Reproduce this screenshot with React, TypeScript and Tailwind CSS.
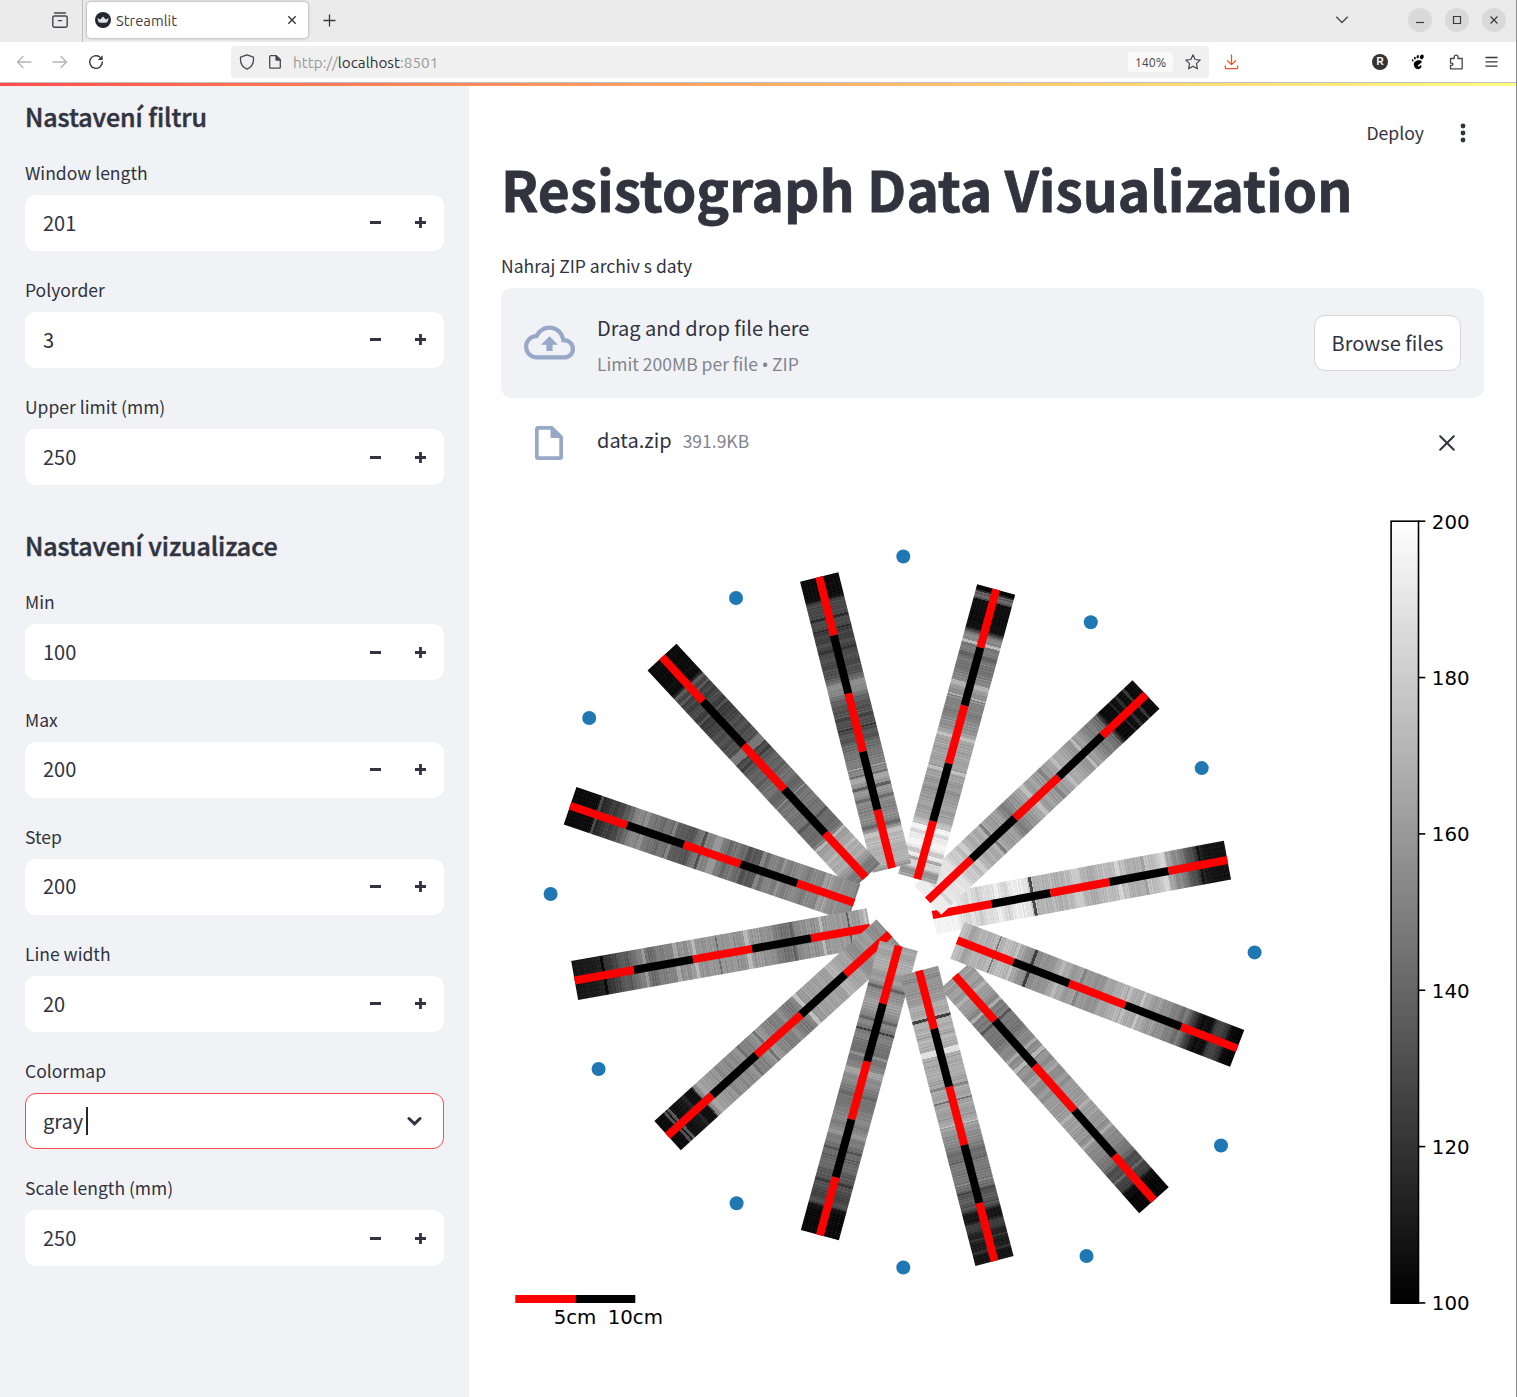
import React from "react";

const UI = "font-['Ubuntu','Noto_Sans',sans-serif]";
const SANS = "font-['Source_Sans_Pro','Noto_Sans_CJK_SC',sans-serif]";

/* ---------- Browser chrome ---------- */

function TabBar() {
  return (
    <div className="flex h-[42px] items-center bg-[#ebebeb] pr-[9px]">
      <div className="flex h-full w-[83px] items-center border-r border-[#bdbdbd] pl-[52px]">
        <svg className="mt-[-2px]" width="16" height="16" viewBox="0 0 16 16" fill="none" stroke="#45454b" strokeWidth="1.4" strokeLinecap="round">
          <path d="M2.5 1h11" />
          <rect x=".8" y="4" width="14.4" height="11.2" rx="1.6" />
          <path d="M6.3 8.6h3.4" />
        </svg>
      </div>
      <div className="ml-1 mt-[-2px] flex h-9 w-[221px] items-center rounded bg-white pl-2 pr-[10px] shadow-[0_0_3px_rgba(0,0,0,0.4)]">
        <svg width="16" height="16" viewBox="0 0 16 16">
          <circle cx="8" cy="8" r="8" fill="#262730" />
          <path d="M2.3 6 5.2 7.4 8 4.6l2.8 2.8L13.700 6 12.300 10.200Q8 11.200 3.700 10.200Z" fill="#e3e3e6" />
        </svg>
        <span className={`${UI} ml-[5px] flex-1 pt-px text-[14.800px] leading-5 text-[#3f4044]`}>Streamlit</span>
        <svg width="12" height="12" viewBox="0 0 12 12" stroke="#3a3a3a" strokeWidth="1.4">
          <path d="M2.300 2.300l7.400 7.400M9.700 2.300l-7.400 7.400" />
        </svg>
      </div>
      <svg className="ml-[15px] mt-[-1px]" width="13" height="13" viewBox="0 0 13 13" stroke="#3a3a3a" strokeWidth="1.3">
        <path d="M6.500 .5v12M.5 6.500h12" />
      </svg>
      <div className="flex-1" />
      <svg className="mr-[59px] mt-[-2px]" width="14" height="14" viewBox="0 0 14 14" fill="none" stroke="#4a4a4a" strokeWidth="1.4">
        <path d="M1.300 3.800 7 9.500l5.700-5.700" />
      </svg>
      <div className="mt-[-2px] flex gap-[13px] pr-[1px]">
        {["M8 14.500h8", "M8.500 8.500h7v7h-7z", "M8.500 8.500l7 7M15.500 8.500l-7 7"].map((d) => (
          <span key={d} className="flex size-6 rounded-full bg-[#d9d9d9]">
            <svg width="24" height="24" viewBox="0 0 24 24" fill="none" stroke="#3a3a3a" strokeWidth="1.200">
              <path d={d} />
            </svg>
          </span>
        ))}
      </div>
    </div>
  );
}

function NavBar() {
  return (
    <div className="flex h-10 items-center bg-white pl-4 pr-[18px]">
      <svg width="16" height="14" viewBox="0 0 16 14" fill="none" stroke="#b4b4b6" strokeWidth="1.300" strokeLinecap="round">
        <path d="M15 7H1.500M7 1.500 1.500 7 7 12.500" />
      </svg>
      <svg className="ml-5" width="16" height="14" viewBox="0 0 16 14" fill="none" stroke="#b4b4b6" strokeWidth="1.300" strokeLinecap="round">
        <path d="M1 7h13.500M9 1.500 14.500 7 9 12.500" />
      </svg>
      <svg className="ml-5" width="16" height="16" viewBox="0 0 16 16" fill="none" stroke="#37373b" strokeWidth="1.400" strokeLinecap="round">
        <path d="M14.300 8A6.300 6.300 0 1 1 11.800 3" />
        <path d="M14.600 1.200v4.900H9.700z" fill="#37373b" stroke="none" />
      </svg>
      <div className="ml-[127px] flex h-8 w-[978px] items-center rounded bg-[#f0f0f0] pl-2 pr-2">
        <svg width="16" height="16" viewBox="0 0 16 16" fill="none" stroke="#4a4a4e" strokeWidth="1.300" strokeLinejoin="round">
          <path d="M8 .8 14.400 3.200c.6 5-1.600 9.900-6.400 12C3.200 13.100 1 8.200 1.600 3.200z" />
        </svg>
        <svg className="ml-[14px]" width="12" height="16" viewBox="0 0 12 16" fill="none" stroke="#4a4a4e" strokeWidth="1.300" strokeLinejoin="round">
          <path d="M1.800 1.700h5.400l4.100 4.100v7.400q0 1-1 1H1.700q-1 0-1-1V2.700q0-1 1.100-1z" />
          <path d="M7 1.700v4.300h4.300z" fill="#4a4a4e" />
        </svg>
        <span className={`${UI} ml-3 flex-1 pt-px text-[15.300px] leading-5 text-[#99999b]`}>
          http://<span className="text-[#333336]">localhost</span>:8501
        </span>
        <span className={`${UI} flex h-5 w-[45px] items-center justify-center rounded-sm bg-[#fafafa] pt-px text-[12.500px] text-[#48484c]`}>140%</span>
        <svg className="ml-3" width="16" height="16" viewBox="0 0 16 16" fill="none" stroke="#48484c" strokeWidth="1.200" strokeLinejoin="round">
          <path d="M8 .8l2.100 4.700 5.100.6-3.800 3.500 1 5.200L8 12.200l-4.400 2.600 1-5.200L.8 6.100l5.100-.6z" />
        </svg>
      </div>
      <svg className="ml-[15px]" width="15" height="16" viewBox="0 0 15 16" fill="none" stroke="#e9541f" strokeWidth="1.300" strokeLinecap="round" strokeLinejoin="round">
        <path d="M7.500 1v9.200M3.400 6.600l4.100 4 4.100-4M1.300 11.800v1.700q0 1.200 1.200 1.200h10q1.200 0 1.200-1.200v-1.700" />
      </svg>
      <div className="flex-1" />
      <span className="flex size-4 items-center justify-center rounded-full bg-[#343437] font-['Liberation_Sans',sans-serif] text-[10px] font-bold leading-none text-white">R</span>
      <svg className="ml-[23px]" width="14" height="16" viewBox="0 0 14 16" fill="#000">
        <ellipse cx="10.800" cy="2.900" rx="1.900" ry="2.300" transform="rotate(25 10.800 2.900)" />
        <ellipse cx="6.700" cy="2.700" rx="1.100" ry="1.700" transform="rotate(10 6.700 2.700)" />
        <ellipse cx="3.900" cy="4.200" rx=".9" ry="1.400" transform="rotate(-10 3.900 4.200)" />
        <ellipse cx="1.700" cy="6.300" rx=".8" ry="1.200" transform="rotate(-25 1.700 6.300)" />
        <path d="M9.900 6.600C7 5.400 2.500 7.200 2.800 10.800 3 13.700 5.100 15.400 7.300 15.200c2-.2 3.300-1.800 3.200-3.100-.1-.9-1-1-1.600-.4-.6.700-1.200 1.200-1.800.6-.5-.6 0-1.100.9-1.700 2-1.300 3.700-2.900 1.900-4z" />
      </svg>
      <svg className="ml-6" width="15" height="16" viewBox="0 0 15 16" fill="none" stroke="#48484c" strokeWidth="1.300" strokeLinejoin="round">
        <path d="M1.500 9.200V4.500h3.700V3a1.900 1.900 0 0 1 3.800 0v1.500h4.200v10.300H1.500v-3.400h1.300a1.100 1.100 0 0 0 0-2.200z" />
      </svg>
      <svg className="ml-[21px]" width="13" height="12" viewBox="0 0 13 12" stroke="#37373b" strokeWidth="1.300">
        <path d="M.5 1.500h12M.5 5.800h12M.5 10.100h12" />
      </svg>
    </div>
  );
}

/* ---------- Sidebar ---------- */

function FieldLabel({ children }: { children: React.ReactNode }) {
  return <div className="h-[39px] pt-[3px] text-[17.500px] leading-7">{children}</div>;
}

function NumberField({ label, value }: { label: string; value: string }) {
  return (
    <div className="h-[117.200px]">
      <FieldLabel>{label}</FieldLabel>
      <div className="flex h-14 items-center rounded-[11px] bg-white pl-[18px] pr-[18px]">
        <span className="flex-1 pb-px text-[20px] leading-8">{value}</span>
        <svg className="mb-[0.600px]" width="11" height="11" viewBox="0 0 11 11" stroke="#31333f" strokeWidth="3">
          <path d="M0 5.500h11" />
        </svg>
        <svg className="mb-[0.600px] ml-[34px]" width="11" height="11" viewBox="0 0 11 11" stroke="#31333f" strokeWidth="2.800">
          <path d="M0 5.500h11M5.500 0v11" />
        </svg>
      </div>
    </div>
  );
}

function Sidebar() {
  return (
    <aside className="w-[469px] shrink-0 bg-[#f0f2f6] pl-[25px] pr-[25px]">
      <h2 className="h-[70px] pt-[10px] text-[25px] font-medium leading-10 tracking-[-0.060px] [-webkit-text-stroke:0.5px]">Nastavení filtru</h2>
      <NumberField label="Window length" value="201" />
      <NumberField label="Polyorder" value="3" />
      <NumberField label="Upper limit (mm)" value="250" />
      <h2 className="h-[77.900px] pt-[17px] text-[25px] font-medium leading-10 tracking-[-0.060px] [-webkit-text-stroke:0.5px]">Nastavení vizualizace</h2>
      <NumberField label="Min" value="100" />
      <NumberField label="Max" value="200" />
      <NumberField label="Step" value="200" />
      <NumberField label="Line width" value="20" />
      <div className="h-[117.200px]">
        <FieldLabel>Colormap</FieldLabel>
        <div className="flex h-14 items-center rounded-[11px] border border-[#ff4b4b] bg-white pl-[17px] pr-[21px]">
          <span className="text-[20px] leading-8">gray</span>
          <span className="ml-[3px] h-7 w-[2px] bg-[#262730]" />
          <span className="flex-1" />
          <svg width="15" height="10" viewBox="0 0 15 10" fill="none" stroke="#31333f" strokeWidth="3" strokeLinecap="round" strokeLinejoin="miter">
            <path d="M2 2.500l5.500 5.300L13 2.500" />
          </svg>
        </div>
      </div>
      <NumberField label="Scale length (mm)" value="250" />
    </aside>
  );
}

/* ---------- Chart ---------- */

type Stops = [number, number][];
interface Core {
  from: [number, number];
  to: [number, number];
  base: Stops; // distance from the inner end (0-300), grey level
  marks: [number, number, number][]; // distance, width, grey level
}

const CORES: Core[] = [
  { from: [932.5, 915], to: [1227.7, 860], base: [[0, 254], [24, 253], [27, 225], [60, 228], [98, 236], [104, 180], [140, 188], [160, 176], [185, 182], [215, 185], [236, 200], [246, 150], [258, 120], [268, 60], [278, 20], [300, 10]], marks: [[48, 3, 205], [66, 2, 250], [84, 2, 250], [102, 2, 50], [148, 8, 212], [190, 4, 225], [216, 3, 160], [236, 4, 225], [272, 2, 5]] },
  { from: [927.7, 900.3], to: [1145.5, 695], base: [[0, 250], [25, 238], [50, 205], [80, 178], [110, 165], [118, 135], [132, 150], [160, 150], [190, 170], [220, 165], [232, 125], [248, 100], [254, 10], [300, 8]], marks: [[15, 4, 215], [62, 4, 215], [90, 2, 120], [146, 5, 205], [170, 4, 130], [188, 3, 200], [214, 3, 195], [268, 2, 45], [276, 3, 50], [287, 3, 60]] },
  { from: [917.3, 879], to: [996.3, 589], base: [[0, 175], [8, 150], [12, 215], [34, 245], [50, 240], [62, 175], [90, 155], [110, 165], [130, 165], [150, 160], [170, 130], [195, 150], [215, 130], [235, 115], [250, 130], [257, 10], [286, 8], [288, 105], [293, 100], [296, 0], [300, 0]], marks: [[20, 3, 160], [28, 4, 200], [36, 5, 255], [46, 3, 215], [52, 4, 255], [113, 3, 205], [147, 4, 205], [188, 2, 190], [200, 4, 190], [230, 5, 95], [243, 3, 205]] },
  { from: [892, 868], to: [819.2, 577], base: [[0, 150], [6, 170], [35, 185], [44, 130], [70, 140], [90, 155], [110, 120], [130, 95], [150, 70], [175, 100], [188, 145], [200, 75], [262, 70], [273, 80], [278, 10], [300, 5]], marks: [[37, 5, 205], [45, 3, 100], [72, 2, 100], [84, 2, 85], [92, 4, 175], [97, 2, 95], [104, 2, 170], [145, 2, 40], [156, 4, 60], [182, 5, 140], [189, 5, 145], [225, 2, 45], [247, 2, 35], [258, 2, 35]] },
  { from: [865.7, 877.3], to: [662.7, 657.8], base: [[0, 125], [12, 135], [22, 175], [48, 165], [58, 120], [100, 115], [135, 110], [160, 75], [180, 80], [215, 65], [250, 65], [260, 85], [265, 10], [300, 5]], marks: [[36, 3, 195], [52, 3, 195], [78, 2, 80], [110, 2, 150], [162, 4, 55], [174, 9, 130], [225, 3, 85], [252, 2, 95], [259, 3, 95]] },
  { from: [854, 902.7], to: [570, 805.7], base: [[0, 130], [15, 155], [50, 140], [85, 125], [110, 90], [128, 110], [160, 135], [175, 90], [205, 110], [228, 130], [250, 75], [268, 40], [276, 10], [300, 5]], marks: [[35, 3, 165], [78, 3, 155], [100, 4, 140], [115, 5, 75], [148, 8, 160], [162, 2, 70], [193, 3, 140], [223, 4, 150], [272, 3, 80]] },
  { from: [870, 927.7], to: [574.7, 980.5], base: [[0, 170], [18, 160], [40, 165], [58, 155], [85, 105], [100, 150], [125, 165], [150, 145], [180, 160], [215, 125], [235, 120], [258, 65], [270, 30], [300, 12]], marks: [[3, 3, 205], [20, 2, 80], [48, 4, 195], [78, 4, 95], [124, 5, 195], [154, 2, 100], [177, 3, 195], [196, 4, 175], [228, 4, 165], [270, 4, 0]] },
  { from: [889.7, 934], to: [668, 1135.3], base: [[0, 140], [25, 155], [60, 165], [85, 175], [110, 160], [120, 125], [155, 150], [200, 140], [235, 155], [248, 140], [251, 15], [280, 18], [292, 10], [300, 5]], marks: [[70, 2, 195], [112, 4, 205], [166, 3, 110], [188, 2, 100], [242, 5, 175], [262, 3, 40], [282, 3, 100], [287, 3, 90]] },
  { from: [898.7, 945.7], to: [820, 1234.7], base: [[0, 165], [35, 155], [45, 125], [60, 160], [88, 120], [110, 110], [130, 150], [155, 115], [195, 140], [220, 100], [268, 75], [272, 8], [300, 3]], marks: [[45, 2, 95], [62, 2, 175], [78, 2, 95], [89, 2, 40], [115, 2, 160], [132, 5, 170], [196, 5, 155], [212, 2, 70], [246, 2, 50]] },
  { from: [919, 970.7], to: [994.5, 1261], base: [[0, 150], [30, 165], [60, 175], [90, 180], [130, 165], [155, 165], [185, 125], [220, 120], [230, 75], [244, 85], [249, 15], [256, 20], [260, 60], [270, 30], [300, 15]], marks: [[49, 3, 45], [70, 3, 195], [84, 5, 240], [120, 2, 130], [134, 2, 100], [158, 2, 200], [196, 2, 90], [218, 2, 150], [227, 2, 60], [275, 2, 60], [288, 2, 50]] },
  { from: [955, 975.7], to: [1153.5, 1199.7], base: [[0, 150], [30, 165], [58, 120], [75, 115], [105, 140], [130, 150], [180, 160], [205, 150], [235, 130], [255, 75], [272, 70], [276, 5], [300, 2]], marks: [[24, 3, 185], [46, 3, 185], [62, 3, 80], [100, 3, 180], [112, 4, 195], [134, 3, 175], [182, 3, 185], [214, 3, 180], [252, 3, 70], [262, 2, 120]] },
  { from: [957.3, 940.3], to: [1237, 1048.3], base: [[0, 200], [10, 165], [30, 180], [50, 190], [76, 155], [82, 145], [110, 175], [128, 160], [134, 145], [170, 180], [200, 175], [225, 140], [245, 85], [258, 10], [268, 15], [274, 65], [284, 60], [289, 5], [300, 5]], marks: [[40, 2, 110], [60, 2, 205], [78, 3, 40], [108, 2, 195], [131, 3, 130], [180, 3, 200], [195, 4, 205], [240, 3, 130]] },
];

const SENSORS: [number, number][] = [
  [903.300, 556.5], [736, 598], [589.2, 718], [550.6, 894], [598.6, 1069], [736.6, 1203.2],
  [903.3, 1267.500], [1086.500, 1256], [1221, 1145.5], [1254.600, 952.4], [1201.700, 768.100], [1090.800, 622.200],
];

function levelAt(base: Stops, x: number) {
  for (let i = 1; i < base.length; i++) {
    const [x1, g1] = base[i];
    if (x <= x1) {
      const [x0, g0] = base[i - 1];
      return g0 + ((g1 - g0) * (x - x0)) / (x1 - x0);
    }
  }
  return base[base.length - 1][1];
}

function stripBands(core: Core, seed: number) {
  let s = seed * 7919 + 17;
  const rnd = () => {
    s = (s * 16807) % 2147483647;
    return s / 2147483647 - 0.5;
  };
  const bands: number[] = [];
  let slow = 0;
  for (let i = 0; i < 200; i++) {
    const x = (i + 0.5) * 1.5;
    slow = slow * 0.7 + rnd() * 18;
    const level = levelAt(core.base, x);
    const amp = level < 30 ? 0.4 : level > 235 ? 0.3 : 1;
    let g = level + (slow + rnd() * 8) * amp + (i % 2 ? 4 : -4) * amp;
    const mark = core.marks.find(([p, w]) => Math.abs(p - x) <= w / 2 + 0.1);
    if (mark) g = mark[2] * 0.85 + level * 0.15;
    bands.push(Math.round(Math.max(0, Math.min(255, g))));
  }
  return bands;
}

function CoreStrip({ core, index }: { core: Core; index: number }) {
  const [x0, y0] = core.from;
  const angle = (Math.atan2(core.to[1] - y0, core.to[0] - x0) * 180) / Math.PI;
  const bands = stripBands(core, index + 1);
  const id = `core-${index}`;
  return (
    <g transform={`translate(${x0} ${y0}) rotate(${angle.toFixed(3)})`}>
      <linearGradient id={id}>
        {bands.flatMap((g, i) => {
          const c = `rgb(${g},${g},${g})`;
          return [
            <stop key={`${i}a`} offset={i / 200} stopColor={c} />,
            <stop key={`${i}b`} offset={(i + 1) / 200} stopColor={c} />,
          ];
        })}
      </linearGradient>
      <rect x="0" y="-19.700" width="300" height="39.400" fill={`url(#${id})`} />
      <rect x="0" y="-19.700" width="300" height="39.400" fill="url(#grain)" />
      {[0, 1, 2, 3, 4].map((k) => (
        <rect key={k} x={k * 60} y="-4" width="60" height="8" fill={k % 2 ? "#000" : "#f00"} />
      ))}
    </g>
  );
}

function Chart() {
  return (
    <svg className="block" width="983" height="850" viewBox="501 490 983 850" fontFamily="DejaVu Sans, sans-serif" fontSize="19.800">
      <defs>
        <linearGradient id="scale" x1="0" y1="0" x2="0" y2="1">
          <stop offset="0" stopColor="#fff" />
          <stop offset="1" stopColor="#000" />
        </linearGradient>
        <pattern id="grain" width="2.400" height="4" patternUnits="userSpaceOnUse">
          <rect x="0" y="0" width="1" height="2.600" fill="#fff" fillOpacity="0.070" />
          <rect x="1.200" y="0" width="1" height="4" fill="#000" fillOpacity="0.080" />
        </pattern>
      </defs>
      {CORES.map((core, i) => (
        <CoreStrip key={i} core={core} index={i} />
      ))}
      {SENSORS.map(([x, y]) => (
        <circle key={`${x}-${y}`} cx={x} cy={y} r="7" fill="#1f77b4" />
      ))}
      <rect x="515.300" y="1295" width="60" height="8" fill="#f00" />
      <rect x="575.300" y="1295" width="60" height="8" fill="#000" />
      <text x="575" y="1324" textAnchor="middle">5cm</text>
      <text x="635.300" y="1324" textAnchor="middle">10cm</text>
      <rect x="1391.100" y="521.200" width="27.400" height="782" fill="url(#scale)" stroke="#000" strokeWidth="1.600" />
      {[200, 180, 160, 140, 120, 100].map((v, i) => (
        <g key={v}>
          <path d={`M1418 ${521.2 + i * 156.35}h7.300`} stroke="#000" strokeWidth="1.600" />
          <text x="1431.800" y={528.6 + i * 156.3}>{v}</text>
        </g>
      ))}
    </svg>
  );
}

/* ---------- Main area ---------- */

function Main() {
  return (
    <main className="flex w-[1047px] shrink-0 flex-col bg-white pl-8 pr-8">
      <div className="flex h-[69px] items-center justify-end pr-[18px] pt-[25px]">
        <span className="text-[17.600px] leading-7">Deploy</span>
        <svg className="ml-9" width="6" height="20" viewBox="0 0 6 20" fill="#31333f">
          <circle cx="3" cy="3" r="2.400" />
          <circle cx="3" cy="10" r="2.400" />
          <circle cx="3" cy="17" r="2.400" />
        </svg>
      </div>
      <h1 className="h-[93px] whitespace-nowrap text-[55px] font-bold leading-[66px] tracking-[0.010px] [-webkit-text-stroke:0.8px]">Resistograph Data Visualization</h1>
      <div className="h-10 pt-1 text-[17.550px] leading-7">Nahraj ZIP archiv s daty</div>
      <div className="flex h-[110px] items-center rounded-[11px] bg-[#f0f2f6] pl-[23px] pr-[23px]">
        <svg className="mt-[-1px]" width="51" height="51" viewBox="0 0 24 24" fill="#98a8c8">
          <path d="M19.350 10.040C18.670 6.590 15.640 4 12 4 9.110 4 6.600 5.640 5.350 8.040 2.340 8.360 0 10.910 0 14c0 3.310 2.690 6 6 6h13c2.760 0 5-2.240 5-5 0-2.640-2.050-4.780-4.650-4.960zM19 18H6c-2.210 0-4-1.790-4-4 0-2.050 1.530-3.760 3.560-3.970l1.070-.11.5-.95C8.080 7.140 9.940 6 12 6c2.620 0 4.880 1.860 5.390 4.430l.3 1.500 1.530.11c1.560.1 2.780 1.410 2.780 2.960 0 1.650-1.350 3-3 3zM8 13h2.550v3h2.900v-3H16l-4-4z" />
        </svg>
        <div className="ml-[22px] flex-1 pt-[6px]">
          <div className="text-[20px] leading-9">Drag and drop file here</div>
          <div className="flex text-[17.500px] leading-9 text-[#83848c]">
            <span>Limit 200MB per file</span>
            <span className="flex w-[14px] justify-center font-['Noto_Sans',sans-serif] text-[18px]">•</span>
            <span>ZIP</span>
          </div>
        </div>
        <button className="h-14 w-[147px] rounded-[11px] border border-[#d6d6d9] bg-white text-[20px] leading-8">Browse files</button>
      </div>
      <div className="flex h-[92px] items-center pb-[2px] pl-[34px] pr-[29px]">
        <svg width="28" height="34" viewBox="0 0 28 34" fill="#98a8c8">
          <path fillRule="evenodd" d="M3 0H17.500L28 10.300V31a3 3 0 0 1-3 3H3a3 3 0 0 1-3-3V3a3 3 0 0 1 3-3zM3.700 3.700V30.300H24.300V12H15.500V3.700z" />
        </svg>
        <span className="ml-[34px] pb-[6px] text-[20px] leading-8">data.zip</span>
        <span className="ml-[11px] flex-1 pb-[4px] text-[17.500px] leading-8 text-[#83848c]">391.9KB</span>
        <svg width="16" height="16" viewBox="0 0 16 16" stroke="#31333f" strokeWidth="2" strokeLinecap="round">
          <path d="M1.200 1.200l13.600 13.600M14.800 1.200 1.200 14.800" />
        </svg>
      </div>
      <Chart />
    </main>
  );
}

export default function App() {
  return (
    <div className="flex h-[1397px] w-[1517px] flex-col overflow-hidden border-r border-[#8c8c8c] bg-white">
      <TabBar />
      <NavBar />
      <div className="h-px shrink-0 bg-[#bfbfc3]" />
      <div className="h-[3px] shrink-0 bg-gradient-to-r from-[#ff4b4b] to-[#fffd80]" />
      <div className={`flex min-h-0 flex-1 text-[#31333f] ${SANS}`}>
        <Sidebar />
        <Main />
      </div>
    </div>
  );
}
